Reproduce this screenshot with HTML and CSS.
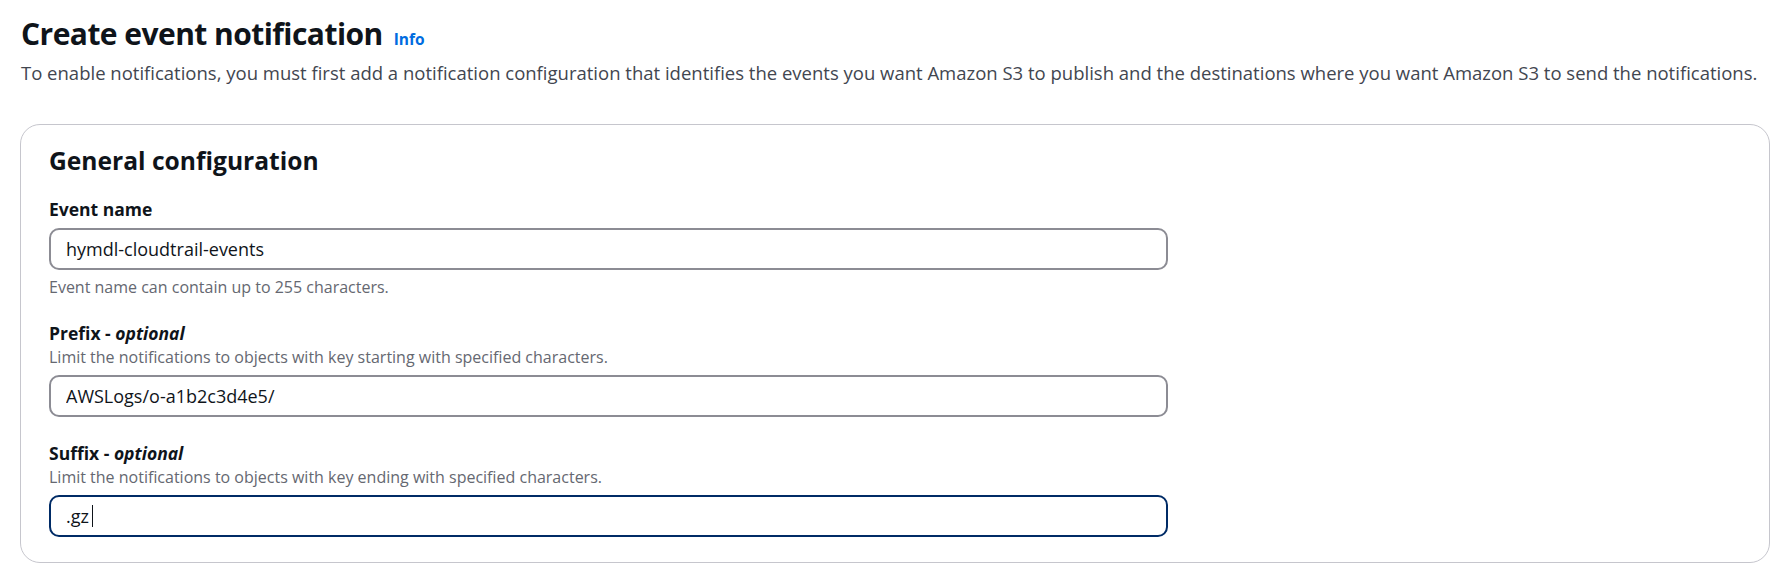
FILE: index.html
```html
<!DOCTYPE html>
<html lang="en">
<head>
    <meta charset="UTF-8">
    <meta name="viewport" content="width=device-width, initial-scale=1.0">
    <title>Create event notification</title>
    <link rel="stylesheet" href="styles.css">
</head>
<body>
    <div class="page-header">
        <div class="title-row">
            <h1 class="page-title">Create event notification</h1>
            <a class="info-link" href="#">Info</a>
        </div>
        <p class="page-description">
            To enable notifications, you must first add a notification configuration that identifies the events you want Amazon S3 to publish and the destinations where you want Amazon S3 to send the notifications.
        </p>
    </div>

    <div class="container">
        <h2 class="container-title">General configuration</h2>

        <div class="form">
            <div class="field">
                <label class="field-label" for="eventName">Event name</label>
                <div class="input-wrap">
                    <input class="input" id="eventName" type="text" value="hymdl-cloudtrail-events">
                </div>
                <div class="field-hint">Event name can contain up to 255 characters.</div>
            </div>

            <div class="field">
                <label class="field-label" for="prefix">Prefix - <i>optional</i></label>
                <div class="field-description">Limit the notifications to objects with key starting with specified characters.</div>
                <div class="input-wrap">
                    <input class="input" id="prefix" type="text" value="AWSLogs/o-a1b2c3d4e5/">
                </div>
            </div>

            <div class="field">
                <label class="field-label" for="suffix">Suffix - <i>optional</i></label>
                <div class="field-description">Limit the notifications to objects with key ending with specified characters.</div>
                <div class="input-wrap">
                    <input class="input input-focused" id="suffix" type="text" value=".gz">
                    <span class="caret"></span>
                </div>
            </div>
        </div>
    </div>
</body>
</html>
```

FILE: styles.css
```css
* {
    margin: 0;
    padding: 0;
    box-sizing: border-box;
}

body {
    font-family: "Open Sans", "Noto Sans", sans-serif;
    background: #ffffff;
    color: #0f141a;
    padding: 16px 13px 0 20px;
}

.title-row {
    display: flex;
    align-items: baseline;
    gap: 11px;
    padding-left: 1px;
}

.page-title {
    font-size: 30px;
    line-height: 36px;
    font-weight: 700;
    letter-spacing: -0.55px;
}

.info-link {
    font-size: 15.5px;
    font-weight: 700;
    color: #006ce0;
    text-decoration: none;
}

.page-description {
    margin-top: 8px;
    padding-left: 1px;
    font-size: 18.5px;
    line-height: 25px;
    color: #424650;
}

.container {
    margin-top: 39px;
    border: 1px solid #c6c6cd;
    border-radius: 20px;
    padding: 21px 28px 25px;
}

.container-title {
    font-size: 24.6px;
    line-height: 30px;
    font-weight: 700;
}

.form {
    max-width: 1119px;
    margin-top: 22px;
    display: flex;
    flex-direction: column;
    gap: 25px;
}

.field {
    display: flex;
    flex-direction: column;
}

.field-label {
    font-size: 17.5px;
    line-height: 22px;
    font-weight: 700;
}

.field-label i {
    font-weight: 700;
}

.field-description {
    margin-top: 3px;
    font-size: 16px;
    line-height: 20px;
    color: #656871;
}

.field-hint {
    margin-top: 7px;
    font-size: 16px;
    line-height: 20px;
    color: #656871;
}

.input-wrap {
    position: relative;
    margin-top: 8px;
}

.input {
    width: 100%;
    height: 42px;
    border: 2px solid #8c8c94;
    border-radius: 10px;
    padding: 0 15px;
    font-family: inherit;
    font-size: 18px;
    color: #0f141a;
    background: #ffffff;
    outline: none;
}

.input-focused {
    border-color: #002b66;
}

.caret {
    position: absolute;
    left: 43px;
    top: 10px;
    width: 1px;
    height: 22px;
    background: #0f141a;
}
```
